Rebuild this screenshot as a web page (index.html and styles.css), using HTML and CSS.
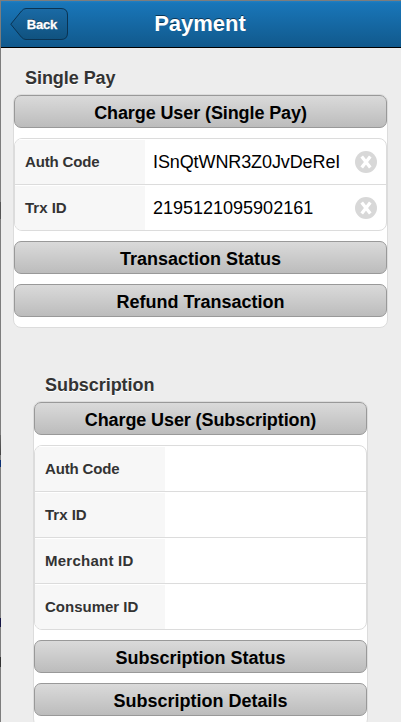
FILE: index.html
```
<!DOCTYPE html>
<html lang="en">
<head>
<meta charset="utf-8">
<title>Payment</title>
<link rel="stylesheet" href="styles.css">
</head>
<body>
<div class="app">
  <header class="toolbar">
    <button class="back">
      <svg class="back-shape" width="58" height="33" viewBox="0 0 58 33" aria-hidden="true">
        <defs><linearGradient id="bg" x1="0" y1="0" x2="0" y2="1"><stop offset="0" stop-color="#1a6aa5"/><stop offset="1" stop-color="#10527f"/></linearGradient></defs>
        <path d="M.8 16.2 11.5 3Q13.500 .5 16 .5H51Q57.500 .5 57.500 7V25Q57.500 31.500 51 31.500H16Q13.500 31.500 11.500 29.300Z" fill="url(#bg)" stroke="#0a3352"/>
      </svg>
      <span class="back-label">Back</span>
    </button>
    <h1 class="title">Payment</h1>
  </header>
  <main class="content">
    <section class="group">
      <h2 class="heading">Single Pay</h2>
      <div class="panel">
        <button class="btn charge">Charge User (Single Pay)</button>
        <div class="fields">
          <div class="field">
            <label class="label tight">Auth Code</label><span class="value code">ISnQtWNR3Z0JvDeReI</span>
            <svg class="clear" viewBox="0 0 22 22"><circle cx="11" cy="11" r="11"/><path d="M6.700 5.500 15.300 16.500M15.300 5.500 6.700 16.500"/></svg>
          </div>
          <div class="field">
            <label class="label">Trx ID</label><span class="value">2195121095902161</span>
            <svg class="clear" viewBox="0 0 22 22"><circle cx="11" cy="11" r="11"/><path d="M6.700 5.500 15.300 16.500M15.300 5.500 6.700 16.500"/></svg>
          </div>
        </div>
        <button class="btn">Transaction Status</button>
        <button class="btn">Refund Transaction</button>
      </div>
    </section>
    <section class="group nested">
      <h2 class="heading">Subscription</h2>
      <div class="panel">
        <button class="btn charge">Charge User (Subscription)</button>
        <div class="fields">
          <div class="field"><label class="label tight">Auth Code</label></div>
          <div class="field"><label class="label">Trx ID</label></div>
          <div class="field"><label class="label wide">Merchant ID</label></div>
          <div class="field"><label class="label">Consumer ID</label></div>
        </div>
        <button class="btn">Subscription Status</button>
        <button class="btn">Subscription Details</button>
      </div>
    </section>
  </main>
</div>
</body>
</html>
```
FILE: styles.css
```
* { box-sizing: border-box; }
body {
  margin: 0;
  height: 722px;
  overflow: hidden;
  padding: 1px 0 0 1px;
  font-family: "Liberation Sans", Arial, sans-serif;
  background:
    linear-gradient(#555, #555) 0 202px / 1px 17px no-repeat,
    linear-gradient(#666, #444) 0 435px / 1px 20px no-repeat,
    linear-gradient(#0b2f73, #0b2f73) 0 460px / 1px 7px no-repeat,
    linear-gradient(#151545, #151545) 0 618px / 1px 9px no-repeat,
    linear-gradient(#333, #333) 0 657px / 1px 10px no-repeat,
    #7d7d7d;
}
.app { height: 721px; overflow: hidden; background: #ededed; }
.toolbar {
  position: relative;
  display: flex;
  align-items: center;
  justify-content: center;
  height: 47px;
  border-bottom: 1px solid #000;
  background: linear-gradient(#2380c3 0, #1976b9 2px, #11598c 100%);
}
.title {
  margin: 0;
  padding: 0 2px 1px 0;
  color: #fff;
  font-size: 22px;
  line-height: 26px;
  text-shadow: 0 -1px 0 rgba(0, 0, 0, .5);
}
.back {
  position: absolute;
  left: 9px;
  top: 7px;
  width: 58px;
  height: 33px;
  padding: 0;
  border: 0;
  background: none;
  font-family: inherit;
}
.back-shape { position: absolute; left: 0; top: 0; }
.back-label {
  position: relative;
  left: 3px;
  color: #fff;
  font-size: 13px;
  font-weight: bold;
  letter-spacing: -.2px;
  -webkit-text-stroke: .3px #fff;
  text-shadow: 0 -1px 0 rgba(0, 0, 0, .5);
}
.content { padding: 19px 13px 0 12px; }
.group { margin-bottom: 46px; }
.nested { padding: 0 20px; }
.heading {
  margin: 0;
  padding: 0 0 0 12px;
  height: 27px;
  color: #333;
  font-size: 18px;
  letter-spacing: -.05px;
  line-height: 22px;
  text-shadow: 0 1px 0 #fff;
}
.panel {
  display: flex;
  flex-direction: column;
  gap: 10px;
  padding-bottom: 10px;
  border: 1px solid #dcdcdc;
  border-radius: 8px;
  background: #fff;
}
.btn {
  display: block;
  width: 100%;
  height: 33px;
  padding: 2px 0 0;
  border: 1px solid #999;
  border-radius: 7px;
  background: linear-gradient(#dadada, #bcbcbc);
  color: #000;
  font: bold 18px/28px "Liberation Sans", Arial, sans-serif;
}
.charge { letter-spacing: -.1px; }
.fields {
  overflow: hidden;
  border: 1px solid #dcdcdc;
  border-radius: 8px;
}
.field {
  display: flex;
  align-items: center;
  height: 46px;
  padding-right: 9px;
  border-bottom: 1px solid #dcdcdc;
}
.field:last-child { height: 45px; border-bottom: 0; }
.label {
  width: 130px;
  height: 100%;
  padding-left: 10px;
  border-top: 1px solid #fff;
  background: #f7f7f7;
  color: #333;
  font-size: 15px;
  font-weight: bold;
  line-height: 44px;
}
.tight { letter-spacing: -.15px; }
.wide { letter-spacing: .25px; }
.value {
  flex: 1;
  padding: 1px 0 0 8px;
  color: #000;
  font-size: 18px;
  white-space: nowrap;
}
.code { letter-spacing: -.1px; }
.clear { width: 22px; height: 22px; }
.clear circle { fill: #d8d8d8; }
.clear path { fill: none; stroke: #fff; stroke-width: 3.3; }
```
